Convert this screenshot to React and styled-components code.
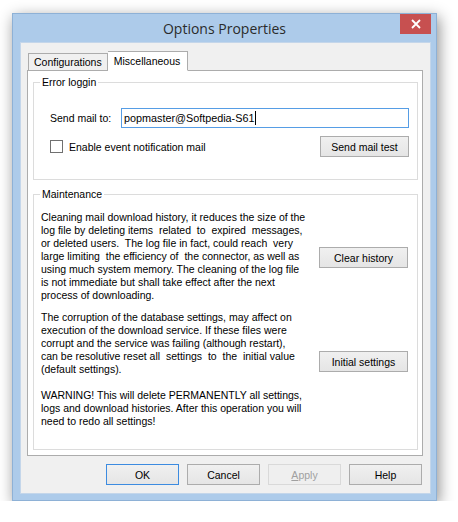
import styled, { createGlobalStyle } from "styled-components";

const GlobalStyle = createGlobalStyle`
  html, body {
    margin: 0;
    padding: 0;
    background: #ffffff;
  }
  body {
    font-family: "Liberation Sans", Arial, sans-serif;
    font-size: 10.5px;
    color: #000;
  }
`;

const maintenance = [
  {
    lines: [
      "Cleaning mail download history, it reduces the size of the",
      "log file by deleting items  related  to  expired  messages,",
      "or deleted users.  The log file in fact, could reach  very",
      "large limiting  the efficiency of  the connector, as well as",
      "using much system memory. The cleaning of the log file",
      "is not immediate but shall take effect after the next",
      "process of downloading.",
    ],
    button: "Clear history",
    offset: 36,
    gap: 9,
  },
  {
    lines: [
      "The corruption of the database settings, may affect on",
      "execution of the download service. If these files were",
      "corrupt and the service was failing (although restart),",
      "can be resolutive reset all  settings  to  the  initial value",
      "(default settings).",
    ],
    button: "Initial settings",
    offset: 40,
    gap: 13,
  },
  {
    lines: [
      "WARNING! This will delete PERMANENTLY all settings,",
      "logs and download histories. After this operation you will",
      "need to redo all settings!",
    ],
  },
];

function App() {
  return (
    <>
      <GlobalStyle />
      <Window>
        <TitleBar>
          <span />
          <Title>Options Properties</Title>
          <CloseButton aria-label="Close">
            <svg width="10" height="10" viewBox="0 0 10 10">
              <path d="M1 1 L9 9 M9 1 L1 9" stroke="#fff" strokeWidth="1.8" />
            </svg>
          </CloseButton>
        </TitleBar>
        <Client>
          <Tabs>
            <Tab>Configurations</Tab>
            <Tab $active>Miscellaneous</Tab>
          </Tabs>
          <Panel>
            <Group $pad="19px 8px 22px 16px">
              <Legend $indent={-10}>Error loggin</Legend>
              <MailRow>
                <span>Send mail to:</span>
                <Input>
                  popmaster@Softpedia-S61
                  <Caret />
                </Input>
              </MailRow>
              <CheckRow>
                <CheckLabel>
                  <Box />
                  Enable event notification mail
                </CheckLabel>
                <Button>Send mail test</Button>
              </CheckRow>
            </Group>
            <Group $pad="10px 9px 0 7px" $grow>
              <Legend $indent={-1}>Maintenance</Legend>
              {maintenance.map((block, i) => (
                <Section key={i} $gap={block.gap}>
                  <Para>{block.lines.join("\n")}</Para>
                  {block.button && (
                    <Button $top={block.offset}>{block.button}</Button>
                  )}
                </Section>
              ))}
            </Group>
          </Panel>
          <Footer>
            <Button $wide $default>OK</Button>
            <Button $wide>Cancel</Button>
            <Button $wide disabled>
              <u>A</u>pply
            </Button>
            <Button $wide>Help</Button>
          </Footer>
        </Client>
      </Window>
    </>
  );
}

export default App;

const Window = styled.div`
  margin: 13px 0 0 12px;
  width: 423px;
  height: 486px;
  background: #adcbea;
  border: 1px solid #8eb1d6;
  box-shadow: 2px 4px 14px rgba(0, 0, 0, 0.45);
  display: flex;
  flex-direction: column;
`;

const TitleBar = styled.div`
  height: 28px;
  display: grid;
  grid-template-columns: 1fr auto 1fr;
  align-items: start;
`;

const Title = styled.div`
  font-family: "Open Sans", "Noto Sans", sans-serif;
  font-size: 14px;
  color: #2b2b2b;
  line-height: 28px;
  padding-top: 1px;
`;

const CloseButton = styled.div`
  justify-self: end;
  margin-right: 5px;
  width: 31px;
  height: 20px;
  background: #c75050;
  display: flex;
  align-items: center;
  justify-content: center;
`;

const Client = styled.div`
  flex: 1;
  margin: 0 5px 6px 7px;
  background: #f0f0f0;
  border: 1px solid #c4d6ea;
  padding: 7px 7px 8px 6px;
  display: flex;
  flex-direction: column;
`;

const Tabs = styled.div`
  display: flex;
  align-items: flex-end;
  padding-left: 1px;
  height: 20px;
  position: relative;
  z-index: 1;
`;

const Tab = styled.div`
  height: ${(p) => (p.$active ? "20px" : "17px")};
  padding: ${(p) => (p.$active ? "2px 7px 0 6px" : "0 5px 0 5px")};
  box-sizing: border-box;
  border: 1px solid #acacac;
  border-bottom: ${(p) => (p.$active ? "1px solid #fff" : "none")};
  border-left: ${(p) => (p.$active ? "none" : "1px solid #acacac")};
  background: ${(p) => (p.$active ? "#ffffff" : "#f0f0f0")};
  margin-bottom: ${(p) => (p.$active ? "-1px" : "0")};
  line-height: ${(p) => (p.$active ? "15px" : "16px")};
  font-size: 10.5px;
  white-space: nowrap;
`;

const Panel = styled.div`
  flex: 1;
  background: #fff;
  border: 1px solid #acacac;
  padding: 5px 4px 5px 5px;
  display: flex;
  flex-direction: column;
  gap: 8px;
`;

const Group = styled.fieldset`
  margin: 0;
  border: 1px solid #dcdcdc;
  padding: ${(p) => p.$pad};
  flex: ${(p) => (p.$grow ? 1 : "none")};
  min-width: 0;
`;

const Legend = styled.legend`
  padding: 0 2px;
  margin-left: ${(p) => p.$indent}px;
  line-height: 13px;
  font-size: 10.5px;
`;

const MailRow = styled.div`
  display: grid;
  grid-template-columns: 71px 1fr;
  align-items: center;
  font-size: 10.5px;
`;

const Input = styled.div`
  height: 20px;
  box-sizing: border-box;
  border: 1px solid #569de5;
  padding: 0 2px;
  display: flex;
  align-items: center;
  font-size: 10.8px;
`;

const Caret = styled.span`
  width: 1px;
  height: 14px;
  background: #000;
  margin-left: 1px;
`;

const CheckRow = styled.div`
  display: flex;
  align-items: center;
  justify-content: space-between;
  margin-top: 8px;
`;

const CheckLabel = styled.label`
  display: flex;
  align-items: center;
  gap: 6px;
  font-size: 10.5px;
`;

const Box = styled.span`
  width: 13px;
  height: 13px;
  box-sizing: border-box;
  border: 1px solid #707070;
  background: #fff;
`;

const Button = styled.button`
  width: ${(p) => (p.$wide ? "73px" : "89px")};
  height: 21px;
  margin-top: ${(p) => (p.$top ? `${p.$top}px` : "0")};
  flex: none;
  align-self: flex-start;
  padding: 0;
  font-family: "Liberation Sans", Arial, sans-serif;
  font-size: 10.5px;
  color: #000;
  background: linear-gradient(#f0f0f0, #e5e5e5);
  border: 1px solid ${(p) => (p.$default ? "#3c8be0" : "#acacac")};
  border-radius: 0;

  &:disabled {
    color: #a0a0a0;
    border-color: #d9d9d9;
    background: #efefef;
  }
`;

const Section = styled.div`
  display: flex;
  justify-content: space-between;
  margin-bottom: ${(p) => (p.$gap ? `${p.$gap}px` : "0")};
`;

const Para = styled.div`
  white-space: pre;
  line-height: 13px;
  font-size: 10.5px;
  color: #000;
`;

const Footer = styled.div`
  display: flex;
  justify-content: flex-end;
  gap: 8px;
  padding: 8px 1px 0 0;
`;
